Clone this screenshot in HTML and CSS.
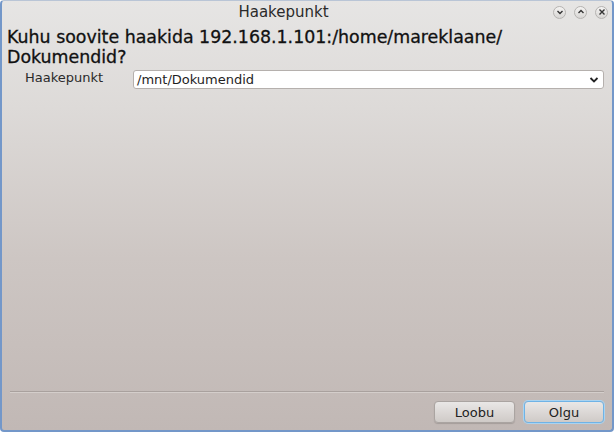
FILE: index.html
```html
<!DOCTYPE html>
<html lang="et">
<head>
    <meta charset="UTF-8">
    <title>Haakepunkt</title>
    <link rel="stylesheet" href="styles.css">
</head>
<body>
    <div class="window">
        <div class="titlebar">
            <div class="title">Haakepunkt</div>
            <div class="win-buttons">
                <span class="win-btn">
                    <svg width="8" height="8" viewBox="0 0 8 8"><path d="M1.5 3 L4 5.5 L6.5 3" fill="none" stroke="#333" stroke-width="1.4"/></svg>
                </span>
                <span class="win-btn">
                    <svg width="8" height="8" viewBox="0 0 8 8"><path d="M1.5 5 L4 2.5 L6.5 5" fill="none" stroke="#333" stroke-width="1.4"/></svg>
                </span>
                <span class="win-btn">
                    <svg width="8" height="8" viewBox="0 0 8 8"><path d="M1.5 1.5 L6.5 6.5 M6.5 1.5 L1.5 6.5" fill="none" stroke="#333" stroke-width="1.4"/></svg>
                </span>
            </div>
        </div>

        <div class="content">
            <h1>Kuhu soovite haakida 192.168.1.101:/home/mareklaane/<br>Dokumendid?</h1>
            <div class="form-row">
                <label>Haakepunkt</label>
                <div class="combo">
                    <span>/mnt/Dokumendid</span>
                    <svg width="10" height="8" viewBox="0 0 10 8"><path d="M1.5 2 L5 5.5 L8.5 2" fill="none" stroke="#222" stroke-width="1.8"/></svg>
                </div>
            </div>
        </div>

        <div class="separator"></div>

        <div class="actions">
            <button>Loobu</button>
            <button class="default">Olgu</button>
        </div>
    </div>
</body>
</html>
```

FILE: styles.css
```css
html, body {
    margin: 0;
    padding: 0;
}
body {
    width: 614px;
    height: 432px;
    font-family: "DejaVu Sans", sans-serif;
    color: #222;
}
.window {
    box-sizing: border-box;
    width: 614px;
    height: 432px;
    display: flex;
    flex-direction: column;
    border: 2px solid #7397c9;
    border-top: 1px solid #b9c5d6;
    border-radius: 4px;
    background: linear-gradient(to bottom, #e6e5e4 0%, #dddad8 25%, #cdc6c3 60%, #c1b8b5 100%);
}
.titlebar {
    display: flex;
    align-items: center;
    height: 22px;
}
.title {
    flex: 1;
    text-align: center;
    padding-left: 16px;
    font-size: 15px;
    color: #2a2a2a;
}
.win-buttons {
    display: flex;
    gap: 8px;
    padding-right: 4px;
    padding-left: 4px;
}
.win-btn {
    width: 13px;
    height: 13px;
    border-radius: 50%;
    border: 1px solid #b5b3b1;
    background: linear-gradient(to bottom, #f4f3f2, #d8d6d4);
    display: flex;
    align-items: center;
    justify-content: center;
    box-sizing: border-box;
}
.content {
    flex: 1;
    padding: 4px 5px 0;
}
h1 {
    margin: 0;
    font-size: 17.4px;
    font-weight: normal;
    line-height: 20px;
    white-space: nowrap;
    color: #111;
    -webkit-text-stroke: 0.3px #111;
}
.form-row {
    display: flex;
    align-items: center;
    margin-top: 3px;
}
.form-row label {
    width: 108px;
    padding-left: 18px;
    font-size: 13px;
    color: #2a2a2a;
    margin-top: -5px;
}
.combo {
    flex: 1;
    height: 19px;
    box-sizing: border-box;
    margin-right: 3px;
    border: 1px solid #b5b0ad;
    border-radius: 3px;
    background: #fff;
    display: flex;
    align-items: center;
    justify-content: space-between;
    padding: 0 4px 0 3px;
    font-size: 13px;
    color: #1e1e1e;
}
.separator {
    height: 1px;
    margin: 0 8px 0 8px;
    background: #a9a19e;
    border-bottom: 1px solid #d4cecb;
}
.actions {
    display: flex;
    justify-content: flex-end;
    gap: 9px;
    padding: 8px 8px 7px;
}
button {
    width: 81px;
    height: 22px;
    font-family: "DejaVu Sans", sans-serif;
    font-size: 13px;
    color: #222;
    border: 1px solid #aaa4a1;
    border-radius: 4px;
    background: linear-gradient(to bottom, #e9e7e6, #cfcac7);
    box-shadow: 0 1px 1px rgba(0, 0, 0, 0.15);
}
button.default {
    width: 80px;
    border: 1px solid #6fb3e6;
    box-shadow: 0 0 0 1px #a9d3f0;
}
```
